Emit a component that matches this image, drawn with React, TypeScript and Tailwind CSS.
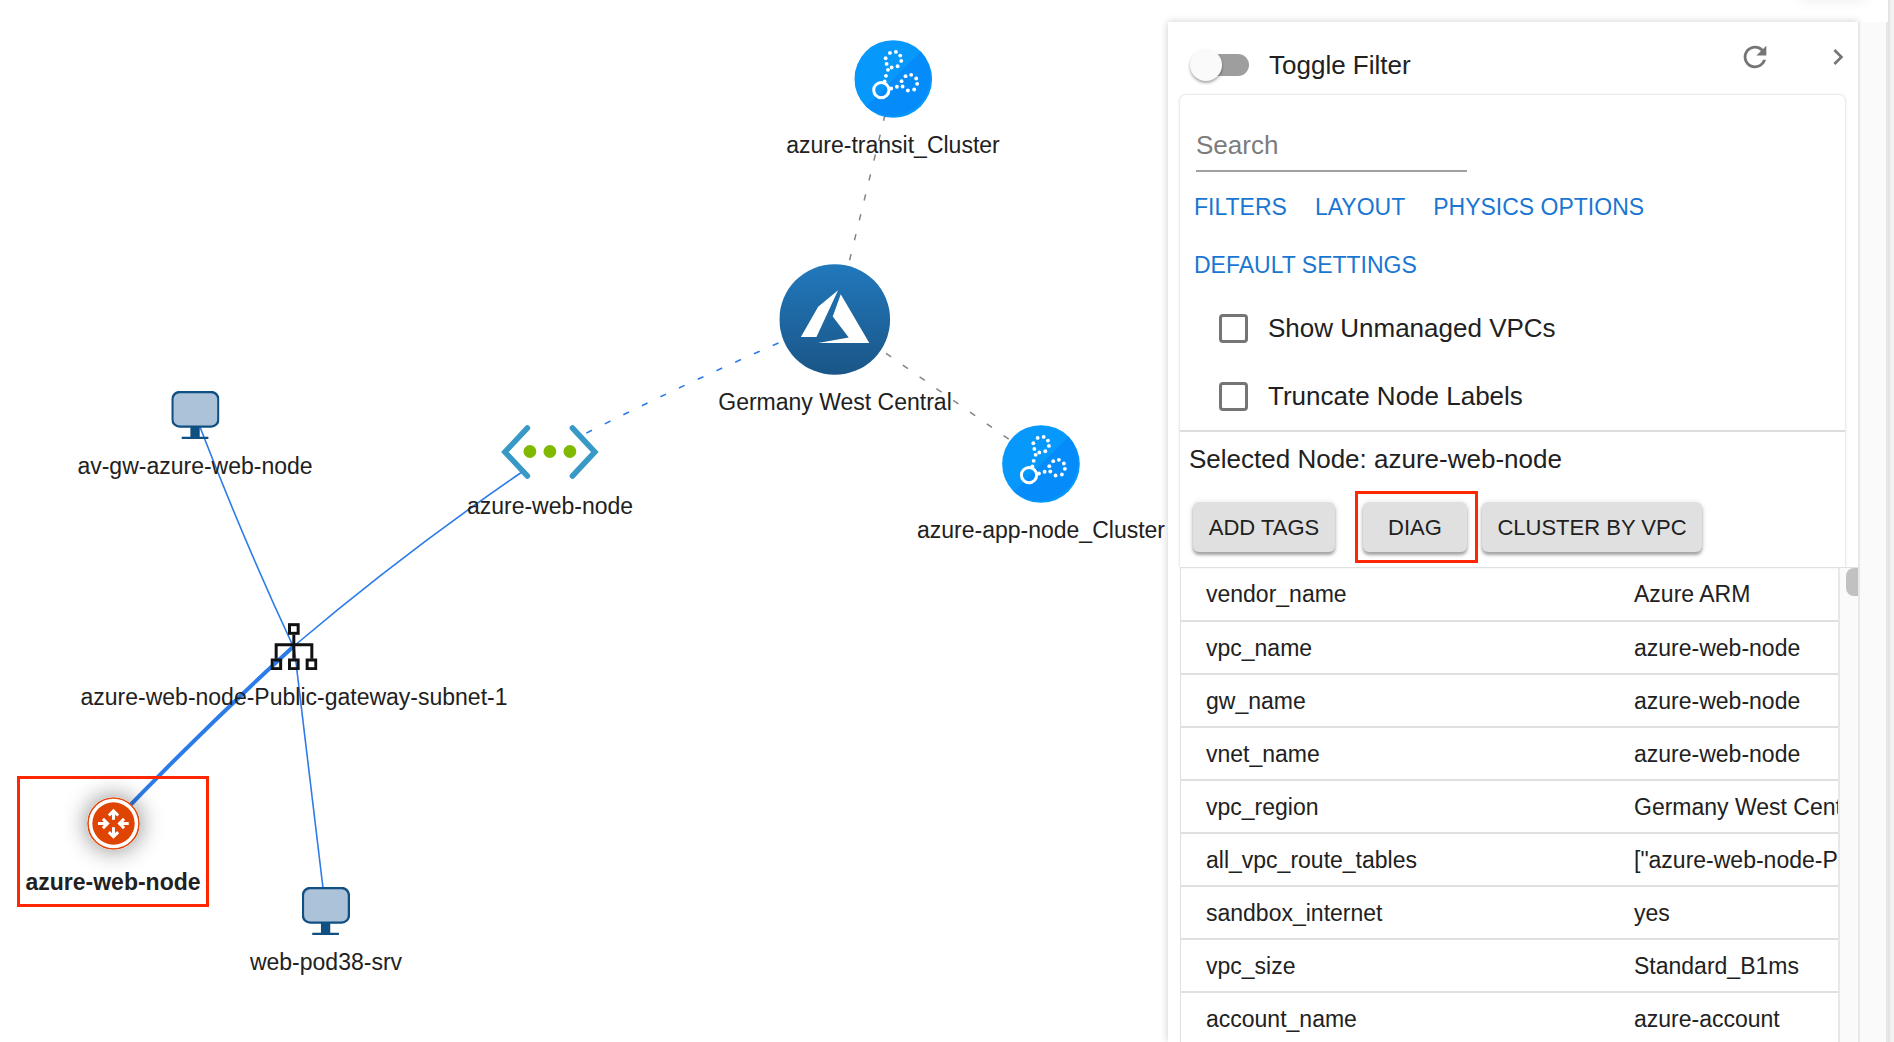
import React, { useState } from "react";
import { MdChevronRight, MdRefresh } from "react-icons/md";

function ClusterIcon() {
  const dots = [
    [568, 98], [586, 95], [599, 106], [602, 122], [591, 138], [573, 142], [558, 131], [555, 114],
    [562, 149], [556, 167], [552, 184],
    [615, 168], [632, 164], [647, 175], [650, 191], [641, 208], [622, 211], [606, 199], [603, 183],
    [589, 200], [572, 205],
  ];
  return (
    <svg viewBox="461 59 234 235" className="size-[78px]" aria-hidden="true">
      <circle cx="578" cy="176.500" r="117" fill="#0698fb" />
      <path d="M497 260A117 117 0 0 0 661 94Z" fill="#068bfb" />
      <circle cx="542" cy="210" r="23" fill="none" stroke="#fff" strokeWidth="9" />
      {dots.map(([x, y]) => (
        <circle key={`${x}-${y}`} cx={x} cy={y} r="5.800" fill="#fff" />
      ))}
    </svg>
  );
}

function AzureIcon() {
  return (
    <svg viewBox="236 731 334 334" className="size-[111px]" aria-hidden="true">
      <defs>
        <linearGradient id="azure-disc" x1="0" y1="0" x2="0" y2="1">
          <stop offset="0" stopColor="#2178bc" />
          <stop offset="1" stopColor="#1a5687" />
        </linearGradient>
      </defs>
      <circle cx="403" cy="898" r="166.500" fill="url(#azure-disc)" />
      <path d="M413 810L353 860L301 951H348ZM421 822L507 969H353L445 952L397 889Z" fill="#fff" />
    </svg>
  );
}

function MonitorIcon() {
  return (
    <svg viewBox="906 380 144 144" className="size-12" aria-hidden="true">
      <rect x="909" y="383" width="138" height="104" rx="22" fill="#abc2d8" stroke="#0f4f82" strokeWidth="7" />
      <path d="M963 487H991V517H1017V524H937V517H963Z" fill="#0f4f82" />
    </svg>
  );
}

function VnetIcon() {
  return (
    <svg viewBox="0 0 100 54" className="h-[54px] w-[100px]" aria-hidden="true">
      <g fill="none" stroke="#3999c6" strokeWidth="5.500" strokeLinecap="round">
        <path d="M27.500 3L5 27L27.500 51" />
        <path d="M72.500 3L95 27L72.500 51" />
      </g>
      <g fill="#7fba00">
        <circle cx="30" cy="26.500" r="6.400" />
        <circle cx="50" cy="26.500" r="6.400" />
        <circle cx="70" cy="26.500" r="6.400" />
      </g>
    </svg>
  );
}

function SubnetIcon() {
  return (
    <svg viewBox="632 69 141 141" className="size-[47px]" aria-hidden="true">
      <g fill="none" stroke="#111" strokeWidth="9">
        <rect x="689" y="74" width="26" height="26" />
        <rect x="636.500" y="180" width="26" height="26" />
        <rect x="689" y="180" width="26" height="26" />
        <rect x="742" y="180" width="26" height="26" />
        <path d="M702 104V176M649 176V134H756V176" />
      </g>
    </svg>
  );
}

function GatewayIcon() {
  return (
    <svg
      viewBox="258 109 160 160"
      className="size-[53px] rounded-full shadow-[0_0_22px_2px_rgba(0,0,0,0.4)]"
      aria-hidden="true"
    >
      <circle cx="338" cy="189" r="77" fill="#fff" stroke="#e2470a" strokeWidth="5" />
      <circle cx="338" cy="189" r="64" fill="#e04403" />
      <g fill="none" stroke="#fff" strokeWidth="9">
        <path d="M338 178V152M324 165L338 151L352 165" />
        <path d="M338 200V228M324 215L338 229L352 215" />
        <path d="M291 189H318M306 175L320 189L306 203" />
        <path d="M384 189H358M370 175L356 189L370 203" />
      </g>
    </svg>
  );
}

const nodes = [
  { label: "azure-transit_Cluster", place: "left-[893px] top-[40px]", Icon: ClusterIcon },
  { label: "Germany West Central", place: "left-[835px] top-[264px]", Icon: AzureIcon },
  { label: "azure-app-node_Cluster", place: "left-[1041px] top-[425px]", Icon: ClusterIcon },
  { label: "av-gw-azure-web-node", place: "left-[195px] top-[391px]", Icon: MonitorIcon },
  { label: "azure-web-node", place: "left-[550px] top-[425px]", Icon: VnetIcon },
  { label: "azure-web-node-Public-gateway-subnet-1", place: "left-[294px] top-[623px]", Icon: SubnetIcon },
  { label: "web-pod38-srv", place: "left-[326px] top-[887px]", Icon: MonitorIcon },
];

function Topology() {
  return (
    <main className="relative min-w-0 flex-1 overflow-hidden text-[23px] leading-7">
      <svg className="absolute left-0 top-0 h-[1042px] w-[1168px]" viewBox="0 0 1168 1042" fill="none" aria-hidden="true">
        <g stroke="#848484" strokeWidth="1.500" strokeDasharray="6.300 14.200">
          <path d="M849.600 260.200L885 115" />
          <path d="M886 353.300L1010 440" />
        </g>
        <path d="M778.500 343Q682 385 585.500 433.500" stroke="#2b7ce9" strokeWidth="1.600" strokeDasharray="6.300 14.300" />
        <g stroke="#2b7ce9" strokeWidth="1.600">
          <path d="M200 427Q244 541 293 646" />
          <path d="M522 472Q405 552 294 646" />
          <path d="M294 646L323 888" />
          <path d="M113 823Q205 727 294 646" strokeWidth="4" />
        </g>
      </svg>
      {nodes.map(({ label, place, Icon }) => (
        <div key={place} className={`absolute flex -translate-x-1/2 flex-col items-center gap-[13px] ${place}`}>
          <Icon />
          <span className="whitespace-nowrap">{label}</span>
        </div>
      ))}
      <div className="absolute left-[17px] top-[776px] flex h-[131px] w-[192px] flex-col items-center gap-[18px] border-3 border-[#ff2600] pt-[18px] font-bold">
        <GatewayIcon />
        <span className="whitespace-nowrap">azure-web-node</span>
      </div>
    </main>
  );
}

function CheckRow({ label }: { label: string }) {
  return (
    <label className="flex items-center gap-5 text-[26px] leading-8">
      <input
        type="checkbox"
        className="size-[29px] appearance-none rounded-sm border-3 border-[#757575] checked:bg-[#1976d2]"
      />
      {label}
    </label>
  );
}

const rows = [
  ["vendor_name", "Azure ARM"],
  ["vpc_name", "azure-web-node"],
  ["gw_name", "azure-web-node"],
  ["vnet_name", "azure-web-node"],
  ["vpc_region", "Germany West Central"],
  ["all_vpc_route_tables", '["azure-web-node-Public-gateway-subnet-1"]'],
  ["sandbox_internet", "yes"],
  ["vpc_size", "Standard_B1ms"],
  ["account_name", "azure-account"],
];

const actionClass =
  "h-[50px] rounded-md bg-[#e0e0e0] text-[22px] shadow-[0_3px_3px_rgba(0,0,0,0.3),0_1px_6px_rgba(0,0,0,0.15)]";

function SidePanel() {
  const [search, setSearch] = useState("");
  return (
    <aside className="mt-[22px] flex w-[690px] shrink-0 flex-col bg-white pl-3 shadow-[0_0_8px_rgba(0,0,0,0.2)]">
      <header className="flex h-[73px] shrink-0 items-start pl-[15px] pr-1">
        <label className="mt-[27px] flex items-center gap-5 text-[26px] leading-8">
          <input
            type="checkbox"
            role="switch"
            className="relative h-[22px] w-[54px] appearance-none rounded-full bg-[#9e9e9e] before:absolute before:-left-[5px] before:-top-[5px] before:size-8 before:rounded-full before:bg-[#fafafa] before:shadow-[0_2px_3px_rgba(0,0,0,0.35)] checked:before:left-[27px]"
          />
          Toggle Filter
        </label>
        <button type="button" aria-label="Refresh" className="ml-auto mt-[18px] text-[#757575]">
          <MdRefresh size={34} />
        </button>
        <button type="button" aria-label="Collapse panel" className="ml-[50px] mt-[19px] text-[#757575]">
          <MdChevronRight size={32} />
        </button>
      </header>

      <section className="mr-[13px] flex h-[472px] shrink-0 flex-col rounded-t-md shadow-[0_0_3px_rgba(0,0,0,0.22)]">
        <div className="h-[335px] px-3.5 pt-8">
          <input
            type="text"
            aria-label="Search"
            placeholder="Search"
            value={search}
            onChange={(e) => setSearch(e.target.value)}
            className="ml-0.5 block h-[45px] w-[271px] border-b-2 border-[#a0a0a0] pb-1.5 text-[26px] outline-none placeholder:text-[#7c7c7c]"
          />
          <nav className="mt-1.5 flex flex-wrap gap-x-7 text-[23px] leading-[58px] text-[#1976d2]">
            <button type="button">FILTERS</button>
            <button type="button">LAYOUT</button>
            <button type="button">PHYSICS OPTIONS</button>
            <button type="button" className="mr-24">DEFAULT SETTINGS</button>
          </nav>
          <div className="ml-[25px] mt-[18px] flex flex-col gap-9">
            <CheckRow label="Show Unmanaged VPCs" />
            <CheckRow label="Truncate Node Labels" />
          </div>
        </div>
        <div className="border-t-2 border-[#dddddd] pl-[9px] pt-[11px]">
          <h2 className="text-[26px] leading-8">Selected Node: azure-web-node</h2>
          <div className="mt-4 flex items-center pl-1">
            <button type="button" className={`${actionClass} w-[142px]`}>ADD TAGS</button>
            <div className="ml-5 border-3 border-[#ff2600] py-2 pl-[5px] pr-2">
              <button type="button" className={`${actionClass} block w-[104px]`}>DIAG</button>
            </div>
            <button type="button" className={`${actionClass} ml-1 w-[220px]`}>CLUSTER BY VPC</button>
          </div>
        </div>
      </section>

      <div className="flex min-h-0 flex-1 border-t border-l border-[#e0e0e0]">
        <div className="min-w-0 flex-1 overflow-hidden">
          <table className="w-full table-fixed border-collapse text-[23px] leading-7">
            <tbody>
              {rows.map(([name, value]) => (
                <tr key={name} className="h-[53px] border-b-2 border-[#e0e0e0]">
                  <th scope="row" className="w-[428px] pl-[25px] text-left font-normal">{name}</th>
                  <td className="whitespace-nowrap pl-[25px]">{value}</td>
                </tr>
              ))}
            </tbody>
          </table>
        </div>
        <div className="w-5 border-l-2 border-[#e8e8e8] bg-[#fafafa] pl-1.5">
          <div className="h-7 rounded-l-lg bg-[#c1c1c1]" />
        </div>
      </div>
    </aside>
  );
}

export default function App() {
  return (
    <div className="relative flex h-screen overflow-hidden bg-white font-['Liberation_Sans',Arial,sans-serif] text-[#212121]">
      <Topology />
      <SidePanel />
      <div className="flex w-[30px] shrink-0 flex-col">
        <div className="h-[22px]" />
        <div className="flex-1 border-x-2 border-[#e8e8e8] bg-[#fafafa]" />
      </div>
      <div className="w-1.5 shrink-0 border-l-2 border-[#e4e4e4] bg-[#f1f1f1]" />
      <div className="absolute -top-6 right-7 h-4 w-16 rounded-full shadow-[0_2px_16px_4px_rgba(0,0,0,0.1)]" />
    </div>
  );
}
